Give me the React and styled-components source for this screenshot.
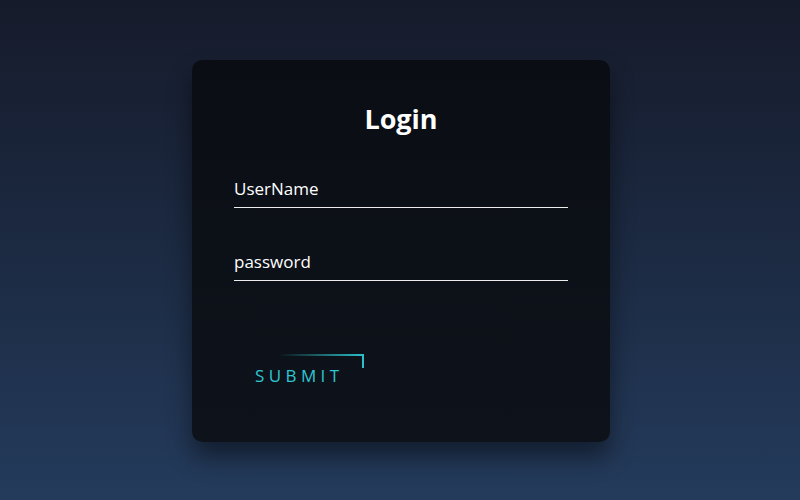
import React from 'react'
import styled, { createGlobalStyle } from 'styled-components'

const GlobalStyle = createGlobalStyle`
  html, body, #root {
    margin: 0;
    padding: 0;
    height: 100%;
  }
  body {
    font-family: 'Open Sans', 'Noto Sans', 'DejaVu Sans', sans-serif;
    background: linear-gradient(180deg, #161b2b 0%, #1c2a42 50%, #243b5c 100%);
  }
`

const Page = styled.div`
  height: 100%;
  display: flex;
  align-items: center;
  justify-content: center;
`

const Card = styled.form`
  width: 418px;
  height: 382px;
  margin: 2px 0 0 2px;
  box-sizing: border-box;
  padding: 40px 42px;
  border-radius: 10px;
  background: linear-gradient(180deg, #0a0d14 0%, #0e131b 100%);
  box-shadow: 0 15px 25px rgba(0, 0, 0, 0.45);
  display: flex;
  flex-direction: column;
`

const Title = styled.h2`
  margin: 0 0 30px;
  padding: 0;
  font-size: 27px;
  line-height: 38px;
  font-weight: 700;
  color: #fff;
  text-align: center;
`

const Field = styled.div`
  height: 39px;
  margin-bottom: 33px;
  border-bottom: 1px solid #ececec;
  box-sizing: content-box;
  display: flex;
  align-items: center;
`

const Label = styled.label`
  font-size: 17px;
  line-height: 22px;
  color: #fff;
  margin-top: 2px;
`

const SubmitRow = styled.div`
  display: flex;
  margin-top: 40px;
`

const Submit = styled.a`
  position: relative;
  padding: 11px 20px 10px 21px;
  font-size: 17px;
  line-height: 22px;
  letter-spacing: 4.4px;
  color: #2ec7d3;
  text-decoration: none;
  text-transform: uppercase;
`

const TopBar = styled.span`
  position: absolute;
  top: 0;
  right: 0;
  width: 85px;
  height: 2px;
  background: linear-gradient(90deg, transparent, #2cc0c8);
`

const SideBar = styled.span`
  position: absolute;
  top: 0;
  right: 0;
  width: 2px;
  height: 14px;
  background: #2cc0c8;
`

export default function App() {
  return (
    <>
      <GlobalStyle />
      <Page>
        <Card>
          <Title>Login</Title>
          <Field>
            <Label>UserName</Label>
          </Field>
          <Field>
            <Label>password</Label>
          </Field>
          <SubmitRow>
            <Submit href='#'>
              <TopBar />
              <SideBar />
              Submit
            </Submit>
          </SubmitRow>
        </Card>
      </Page>
    </>
  )
}
